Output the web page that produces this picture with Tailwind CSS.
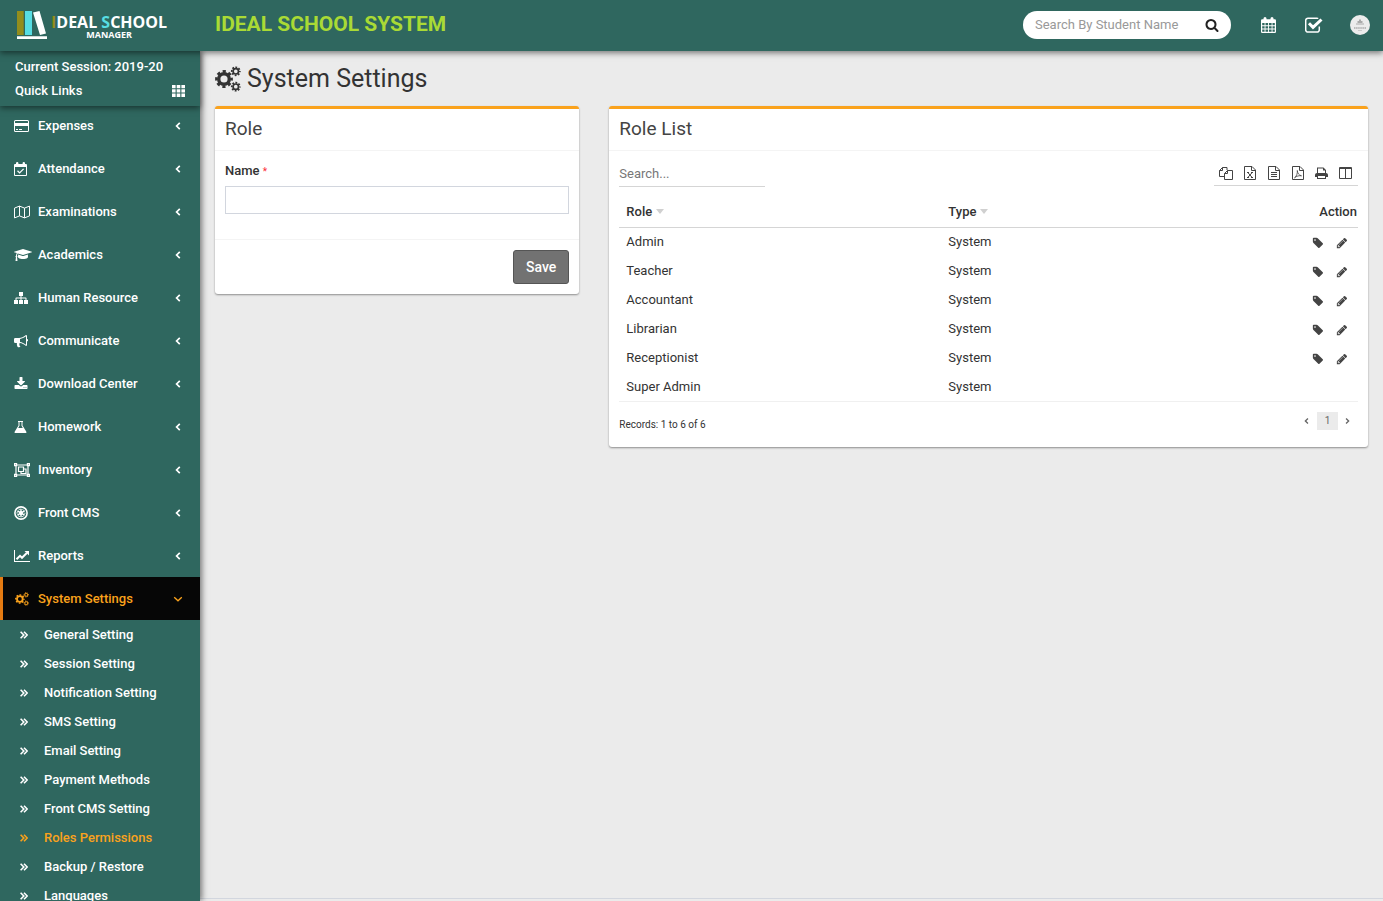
<!DOCTYPE html>
<html lang="en">
<head>
<meta charset="utf-8">
<title>Ideal School System - System Settings</title>
<script src="https://cdn.jsdelivr.net/npm/@tailwindcss/browser@4"></script>
</head>
<body class="h-screen overflow-hidden flex flex-col bg-[#ebebeb] font-[Roboto,sans-serif] text-[13px] text-[#333]">

<svg class="hidden" aria-hidden="true">
  <symbol id="cogs" viewBox="0 0 26 26"><g fill="none" stroke="currentColor"><circle cx="9" cy="13" r="5.300" stroke-width="3.400"/><circle cx="9" cy="13" r="7.600" stroke-width="2.600" stroke-dasharray="3.200 2.769" stroke-dashoffset="1.600"/><circle cx="20.800" cy="5.300" r="2.700" stroke-width="1.700"/><circle cx="20.800" cy="5.300" r="4" stroke-width="1.800" stroke-dasharray="1.800 1.342" stroke-dashoffset=".9"/><circle cx="20.800" cy="20.700" r="2.700" stroke-width="1.700"/><circle cx="20.800" cy="20.700" r="4" stroke-width="1.800" stroke-dasharray="1.800 1.342" stroke-dashoffset=".9"/></g></symbol>
  <symbol id="search" viewBox="0 0 1792 1792"><path d="M1216 832q0-185-131.500-316.500t-316.500-131.500-316.500 131.500-131.500 316.500 131.500 316.500 316.500 131.500 316.500-131.500 131.500-316.500zm512 832q0 52-38 90t-90 38q-54 0-90-38l-343-342q-179 124-399 124-143 0-273.500-55.500t-225-150-150-225-55.500-273.500 55.500-273.500 150-225 225-150 273.500-55.500 273.500 55.500 225 150 150 225 55.500 273.500q0 220-124 399l343 343q37 37 37 90z"/></symbol>
  <symbol id="pencil" viewBox="0 0 1792 1792"><path d="M491 1536l91-91-235-235-91 91v107h128v128h107zm523-928q0-22-22-22-10 0-17 7l-542 542q-7 7-7 17 0 22 22 22 10 0 17-7l542-542q7-7 7-17zm-54-192l416 416-832 832h-416v-416zm683 96q0 53-37 90l-166 166-416-416 166-165q36-38 90-38 53 0 91 38l235 234q37 39 37 91z"/></symbol>
  <symbol id="tag" viewBox="0 0 1792 1792"><path d="M576 448q0-53-37.500-90.500t-90.500-37.500-90.500 37.500-37.500 90.500 37.500 90.500 90.500 37.500 90.500-37.500 37.500-90.500zm1067 576q0 53-37 90l-491 492q-39 37-91 37-53 0-90-37l-715-716q-38-37-64.500-101t-26.500-117v-416q0-52 38-90t90-38h416q53 0 117 26.500t102 64.500l715 714q37 39 37 91z"/></symbol>
  <symbol id="download" viewBox="0 0 1792 1792"><path d="M1344 1344q0-26-19-45t-45-19-45 19-19 45 19 45 45 19 45-19 19-45zm256 0q0-26-19-45t-45-19-45 19-19 45 19 45 45 19 45-19 19-45zm128-224v320q0 40-28 68t-68 28h-1472q-40 0-68-28t-28-68v-320q0-40 28-68t68-28h465l135 136q58 56 136 56t136-56l136-136h464q40 0 68 28t28 68zm-325-569q17 41-14 70l-448 448q-18 19-45 19t-45-19l-448-448q-31-29-14-70 17-39 59-39h256v-448q0-26 19-45t45-19h256q26 0 45 19t19 45v448h256q42 0 59 39z"/></symbol>
  <symbol id="cap" viewBox="0 0 2304 1792"><path d="M1774 836l18 316q4 69-82 128t-235 93.500-323 34.500-323-34.500-235-93.500-82-128l18-316 574 181q22 7 48 7t48-7zm530-324q0 23-22 31l-1120 352q-4 1-10 1t-10-1l-652-206q-43 34-71 111.500t-34 178.500q63 36 63 109 0 69-58 107l58 433q2 14-8 25-9 11-24 11h-192q-15 0-24-11-10-11-8-25l58-433q-58-38-58-107 0-73 65-111 11-207 98-330l-333-104q-22-8-22-31t22-31l1120-352q4-1 10-1t10 1l1120 352q22 8 22 31z"/></symbol>
  <symbol id="card" viewBox="0 0 15 14"><path fill-rule="evenodd" d="M1.500 1h12A1.500 1.500 0 0 1 15 2.500v9a1.500 1.500 0 0 1-1.500 1.500h-12A1.500 1.500 0 0 1 0 11.500v-9A1.500 1.500 0 0 1 1.500 1zM1 2.500V4h13V2.500a.5.5 0 0 0-.5-.5h-12a.5.5 0 0 0-.5.5zM1 7v4.500a.5.5 0 0 0 .5.5h12a.5.5 0 0 0 .5-.5V7zM2 10h2v1H2zM5 10h3v1H5z"/><path d="M1 4h13v3H1z"/></symbol>
  <symbol id="calcheck" viewBox="0 0 13 14"><path fill-rule="evenodd" d="M1 2h1V1.200a1.200 1.200 0 0 1 2.400 0V2h4.200v-.8a1.200 1.200 0 0 1 2.400 0V2h1a1 1 0 0 1 1 1v10a1 1 0 0 1-1 1H1a1 1 0 0 1-1-1V3a1 1 0 0 1 1-1zm0 3v8h11V5z"/><path d="M3.500 8.800l2.100 2.100 4-4" fill="none" stroke="currentColor" stroke-width="1.300"/></symbol>
  <symbol id="map" viewBox="0 0 16 14"><path fill="none" stroke="currentColor" stroke-linejoin="round" d="M.5 3.100L5.500 1.100l5 2 5-2v9.800l-5 2-5-2-5 2zM5.500 1.100v9.800M10.500 3.100v9.800"/></symbol>
  <symbol id="sitemap" viewBox="0 0 14 14"><path d="M5 1h4v4H7.500v1.500h4.200a.8.8 0 0 1 .8.800V9H14v4h-4V9h1.500V7.500h-4V9H9v4H5V9h1.500V7.500h-4V9H4v4H0V9h1.500V7.300a.8.800 0 0 1 .8-.8h4.200V5H5z"/></symbol>
  <symbol id="bullhorn" viewBox="0 0 14 14"><path fill-rule="evenodd" d="M13 5a1 1 0 0 1 0 2.200V11a1 1 0 0 1-1 1c-2-1.700-4-2.800-6-3-.9.300-1 1.200-.4 1.700-.4.700.1 1.200.9 1.900-.5.900-2.200.9-3 .2C3.100 11.500 2.500 10.200 3 9H1.300A1.300 1.300 0 0 1 0 7.700V5.300A1.300 1.300 0 0 1 1.300 4H5c2.300 0 4.700-1.200 7-3a1 1 0 0 1 1 1zM12 2.300C10 3.800 8 4.700 6 4.900v3.200c2 .3 4 1.200 6 2.600z"/></symbol>
  <symbol id="flask" viewBox="0 0 13 14"><path fill-rule="evenodd" d="M4 1h5v1h-.5v3.500l3.700 5.900c.6.900.1 1.600-.8 1.600H1.600c-.9 0-1.400-.7-.8-1.600l3.700-5.900V2H4zm1.500 1v3.800L4.200 8h4.600L7.500 5.800V2z"/></symbol>
  <symbol id="group" viewBox="0 0 16 14"><path fill="none" stroke="currentColor" stroke-width="1.200" d="M2 2h12v10H2z"/><path fill="none" stroke="currentColor" stroke-width="1.200" d="M.6.600h2v2h-2zM13.400.600h2v2h-2zM.6 11.400h2v2h-2zM13.400 11.400h2v2h-2zM4.500 4h5v4.500h-5zM10 6h2v4.500H7V9"/></symbol>
  <symbol id="empire" viewBox="0 0 14 14"><circle cx="7" cy="7" r="6.100" fill="none" stroke="currentColor" stroke-width="1.600"/><circle cx="7" cy="7" r="3.900" fill="none" stroke="currentColor" stroke-width="1" stroke-dasharray="2 2.084" stroke-dashoffset="1"/><circle cx="7" cy="7" r="2"/><path stroke="currentColor" stroke-width="1.400" d="M7 2.800v8.400M3.400 4.900l7.200 4.200M3.400 9.100l7.200-4.200"/></symbol>
  <symbol id="line" viewBox="0 0 16 14"><path d="M0 1h1v11h15v1H0z"/><path fill="none" stroke="currentColor" stroke-width="2" d="M2.500 10.300L6 6.800l2 2 4.800-4.800"/><path d="M10.500 2H15v4.500z"/></symbol>
  <symbol id="left" viewBox="0 0 6 10"><path fill="none" stroke="currentColor" stroke-width="1.700" d="M4.800 1.800L1.600 5l3.200 3.200"/></symbol>
  <symbol id="down" viewBox="0 0 10 6"><path fill="none" stroke="currentColor" stroke-width="1.300" d="M1.200 1.200L5 4.800l3.800-3.600"/></symbol>
  <symbol id="dbl" viewBox="0 0 8 8"><path fill="none" stroke="currentColor" stroke-width="1.600" d="M.6.800L3.800 4 .6 7.200M4 .8L7.200 4 4 7.200"/></symbol>
  <symbol id="th" viewBox="0 0 13 12"><path d="M0 0h3.600v3.300H0zM4.700 0h3.600v3.300H4.700zM9.400 0H13v3.300H9.400zM0 4.300h3.600v3.300H0zM4.700 4.300h3.600v3.300H4.700zM9.400 4.300H13v3.300H9.400zM0 8.600h3.600V12H0zM4.700 8.600h3.600V12H4.700zM9.400 8.600H13V12H9.400z"/></symbol>
  <symbol id="calendar" viewBox="0 0 15 16"><path fill-rule="evenodd" d="M1.200 2.200H2.500V1.500a1.500 1.500 0 0 1 3 0v.7h4V1.500a1.500 1.500 0 0 1 3 0v.7h1.300A1.200 1.200 0 0 1 15 3.400v11.400a1.200 1.200 0 0 1-1.200 1.200H1.200A1.200 1.200 0 0 1 0 14.800V3.400a1.200 1.200 0 0 1 1.200-1.200zM1.200 6v2.300h2.400V6zm3.300 0v2.300h2.600V6zm3.500 0v2.300h2.600V6zm3.500 0v2.300h2.300V6zM1.200 9.200v2.400h2.400V9.200zm3.300 0v2.400h2.600V9.200zm3.500 0v2.400h2.600V9.200zm3.500 0v2.400h2.300V9.200zM1.200 12.500v2.300h2.400v-2.300zm3.300 0v2.300h2.600v-2.300zm3.500 0v2.300h2.600v-2.300zm3.500 0v2.300h2.300v-2.300z"/></symbol>
  <symbol id="check" viewBox="0 0 18 16"><path fill="none" stroke="currentColor" stroke-width="1.500" d="M14.300 9.500v3.300a2.300 2.300 0 0 1-2.300 2.300H3A2.300 2.300 0 0 1 .7 12.800V3.500A2.300 2.300 0 0 1 3 1.200h9c.6 0 1 .1 1.300.3"/><path fill="none" stroke="currentColor" stroke-width="3" d="M4 6.300l4 4 8.500-7.800"/></symbol>
  <symbol id="copy" viewBox="0 0 14 14"><path fill="none" stroke="currentColor" stroke-linejoin="round" d="M5.500 10.500h-5v-6l3-3h4.500v2.500M3.500 1.500v3h-3M5.500 7.500l3-3h5v9h-8zM8.500 4.500v3h-3"/></symbol>
  <symbol id="file" viewBox="0 0 12 14"><path fill="none" stroke="currentColor" stroke-linejoin="round" d="M.5.500h7.500l3.500 3.500v9.500H.5zM7.500.5v4h4"/></symbol>
  <symbol id="excel" viewBox="0 0 12 14"><use href="#file" width="12" height="14"/><path fill="none" stroke="currentColor" d="M3.800 6.500l4.400 5M8.200 6.500l-4.400 5M3 6.500h2M7 6.500h2M3 11.500h2M7 11.500h2"/></symbol>
  <symbol id="text" viewBox="0 0 12 14"><use href="#file" width="12" height="14"/><path stroke="currentColor" d="M3 6.500h6M3 8.500h6M3 10.500h6"/></symbol>
  <symbol id="pdf" viewBox="0 0 12 14"><use href="#file" width="12" height="14"/><path fill="none" stroke="currentColor" stroke-width=".8" d="M5.300 4.500c.2 2.500 1.500 4.700 4.200 5.300-2.200-.4-5 .2-7 2C4.500 10.500 5.600 7.500 5.300 4.500z"/></symbol>
  <symbol id="print" viewBox="0 0 13 14"><path fill-rule="evenodd" d="M2 7V1.500h6.500L11 4v3a2 2 0 0 1 2 1.800V11h-2v2H2v-2H0V8.800A2 2 0 0 1 2 7zm1-4.500V7h7V4.500H8v-2zM3 10v2h7v-2z"/></symbol>
  <symbol id="columns" viewBox="0 0 13 12"><path fill-rule="evenodd" d="M1 0h11a1 1 0 0 1 1 1v10a1 1 0 0 1-1 1H1a1 1 0 0 1-1-1V1a1 1 0 0 1 1-1zm0 2v9h5V2zm6 0v9h5V2z"/></symbol>
</svg>

<header class="relative z-20 flex h-[51px] shrink-0 items-center bg-[#2f675f] pb-px shadow-[0_2px_6px_rgba(0,0,0,0.5)]">
  <a href="#" class="flex w-[200px] shrink-0 items-center gap-1 pl-4 font-['Open_Sans',sans-serif] font-bold text-white">
    <svg class="h-7 w-[31px]" viewBox="0 0 31 28" aria-hidden="true"><path fill="#938d1c" d="M1 0h6.700v24H1z"/><path fill="#57dde3" d="M9 0h7v24H9z"/><path fill="#fff" d="M17 1.500L23.500 0 30 22.500 24 24zM1 25.200h30V28H1z"/></svg>
    <span class="flex flex-col items-center pt-1">
      <span class="text-base leading-4"><span class="text-[#938d1c]">I</span>DEAL <span class="text-[#57dde3]">S</span>CHOOL</span>
      <span class="text-[9px] leading-[10px]">MANAGER</span>
    </span>
  </a>
  <span class="pb-[3px] pl-[15px] text-[21px] leading-6 font-bold text-[#a9da35]">IDEAL SCHOOL SYSTEM</span>
  <form class="ml-auto flex h-7 w-[208px] items-center rounded-full bg-white pr-3 pl-3">
    <input type="text" aria-label="Search by student" placeholder="Search By Student Name" class="w-[147px] text-[13px] outline-none placeholder:text-[#999]">
    <button type="button" aria-label="Search" class="ml-auto"><svg class="size-[14px] fill-[#222]"><use href="#search"/></svg></button>
  </form>
  <nav class="flex items-center pr-[13px] pl-[30px] text-white">
    <a href="#" aria-label="Calendar"><svg class="h-4 w-[15px] fill-current"><use href="#calendar"/></svg></a>
    <a href="#" aria-label="Tasks" class="ml-[29px]"><svg class="h-4 w-[18px] fill-current"><use href="#check"/></svg></a>
    <a href="#" aria-label="Profile" class="ml-[27px]"><svg class="size-5" viewBox="0 0 20 20"><circle cx="10" cy="10" r="10" fill="#ececec"/><path fill="#aaa" d="M6 8.500h8v1H6zM7.500 6h5v2h-5zM9 4.500h2V6H9zM8 15.500h4v.6H8z"/><path stroke="#bbb" stroke-width="2" stroke-dasharray="1.500 .6" d="M4 13h12"/></svg></a>
  </nav>
</header>

<div class="flex min-h-0 flex-1">
  <aside class="relative z-10 w-[200px] shrink-0 bg-[#2f675f] font-medium text-white shadow-[2px_0_6px_rgba(0,0,0,0.5)]">
    <div class="relative h-[55px] px-[15px] pt-1 leading-6 shadow-[0_2px_6px_rgba(0,0,0,0.5)]">
      <p>Current Session: 2019-20</p>
      <a href="#" class="flex items-center justify-between">Quick Links <svg class="h-3 w-[13px] fill-current"><use href="#th"/></svg></a>
    </div>
    <nav class="-mt-0.5">
      <a href="#" class="flex h-[43px] items-center pr-[19px] pl-[14px]"><span class="w-6"><svg class="h-[14px] w-[15px] fill-current"><use href="#card"/></svg></span>Expenses<svg class="ml-auto h-[10px] w-[6px]"><use href="#left"/></svg></a>
      <a href="#" class="flex h-[43px] items-center pr-[19px] pl-[14px]"><span class="w-6"><svg class="h-[14px] w-[13px] fill-current"><use href="#calcheck"/></svg></span>Attendance<svg class="ml-auto h-[10px] w-[6px]"><use href="#left"/></svg></a>
      <a href="#" class="flex h-[43px] items-center pr-[19px] pl-[14px]"><span class="w-6"><svg class="h-[14px] w-4 fill-current"><use href="#map"/></svg></span>Examinations<svg class="ml-auto h-[10px] w-[6px]"><use href="#left"/></svg></a>
      <a href="#" class="flex h-[43px] items-center pr-[19px] pl-[14px]"><span class="w-6"><svg class="h-[14px] w-[18px] fill-current"><use href="#cap"/></svg></span>Academics<svg class="ml-auto h-[10px] w-[6px]"><use href="#left"/></svg></a>
      <a href="#" class="flex h-[43px] items-center pr-[19px] pl-[14px]"><span class="w-6"><svg class="size-[14px] fill-current"><use href="#sitemap"/></svg></span>Human Resource<svg class="ml-auto h-[10px] w-[6px]"><use href="#left"/></svg></a>
      <a href="#" class="flex h-[43px] items-center pr-[19px] pl-[14px]"><span class="w-6"><svg class="size-[14px] fill-current"><use href="#bullhorn"/></svg></span>Communicate<svg class="ml-auto h-[10px] w-[6px]"><use href="#left"/></svg></a>
      <a href="#" class="flex h-[43px] items-center pr-[19px] pl-[14px]"><span class="w-6"><svg class="size-[14px] fill-current"><use href="#download"/></svg></span>Download Center<svg class="ml-auto h-[10px] w-[6px]"><use href="#left"/></svg></a>
      <a href="#" class="flex h-[43px] items-center pr-[19px] pl-[14px]"><span class="w-6"><svg class="h-[14px] w-[13px] fill-current"><use href="#flask"/></svg></span>Homework<svg class="ml-auto h-[10px] w-[6px]"><use href="#left"/></svg></a>
      <a href="#" class="flex h-[43px] items-center pr-[19px] pl-[14px]"><span class="w-6"><svg class="h-[14px] w-4 fill-current"><use href="#group"/></svg></span>Inventory<svg class="ml-auto h-[10px] w-[6px]"><use href="#left"/></svg></a>
      <a href="#" class="flex h-[43px] items-center pr-[19px] pl-[14px]"><span class="w-6"><svg class="size-[14px] fill-current"><use href="#empire"/></svg></span>Front CMS<svg class="ml-auto h-[10px] w-[6px]"><use href="#left"/></svg></a>
      <a href="#" class="flex h-[43px] items-center pr-[19px] pl-[14px]"><span class="w-6"><svg class="h-[14px] w-4 fill-current"><use href="#line"/></svg></span>Reports<svg class="ml-auto h-[10px] w-[6px]"><use href="#left"/></svg></a>
      <a href="#" class="flex h-[43px] items-center border-l-3 border-[#e57b12] bg-[#060606] pr-[17px] pl-3 text-[#faa21c]"><span class="w-[23px]"><svg class="size-[14px] fill-current"><use href="#cogs"/></svg></span>System Settings<svg class="ml-auto h-[6px] w-[10px]"><use href="#down"/></svg></a>
      <a href="#" class="flex h-[29px] items-center pl-5"><span class="w-6"><svg class="size-2"><use href="#dbl"/></svg></span>General Setting</a>
      <a href="#" class="flex h-[29px] items-center pl-5"><span class="w-6"><svg class="size-2"><use href="#dbl"/></svg></span>Session Setting</a>
      <a href="#" class="flex h-[29px] items-center pl-5"><span class="w-6"><svg class="size-2"><use href="#dbl"/></svg></span>Notification Setting</a>
      <a href="#" class="flex h-[29px] items-center pl-5"><span class="w-6"><svg class="size-2"><use href="#dbl"/></svg></span>SMS Setting</a>
      <a href="#" class="flex h-[29px] items-center pl-5"><span class="w-6"><svg class="size-2"><use href="#dbl"/></svg></span>Email Setting</a>
      <a href="#" class="flex h-[29px] items-center pl-5"><span class="w-6"><svg class="size-2"><use href="#dbl"/></svg></span>Payment Methods</a>
      <a href="#" class="flex h-[29px] items-center pl-5"><span class="w-6"><svg class="size-2"><use href="#dbl"/></svg></span>Front CMS Setting</a>
      <a href="#" class="flex h-[29px] items-center pl-5 text-[#faa21c]"><span class="w-6"><svg class="size-2"><use href="#dbl"/></svg></span>Roles Permissions</a>
      <a href="#" class="flex h-[29px] items-center pl-5"><span class="w-6"><svg class="size-2"><use href="#dbl"/></svg></span>Backup / Restore</a>
      <a href="#" class="flex h-[29px] items-center pl-5"><span class="w-6"><svg class="size-2"><use href="#dbl"/></svg></span>Languages</a>
    </nav>
  </aside>

  <div class="flex min-w-0 flex-1 flex-col">
    <main class="flex-1">
      <h1 class="flex h-[55px] items-center gap-[6px] px-[15px] text-[25px]"><svg class="size-[26px] fill-current"><use href="#cogs"/></svg>System Settings</h1>
      <div class="flex items-start">
        <div class="w-1/3 px-[15px]">
          <form class="rounded-[3px] border-t-3 border-[#faa21c] bg-white shadow-[0_1px_2px_rgba(0,0,0,0.4)]">
            <h2 class="h-[42px] border-b border-[#f4f4f4] px-[10px] pt-1.5 text-[19px] leading-7 text-[#444]">Role</h2>
            <div class="px-[10px] pt-[10px] pb-[25px]">
              <label for="role-name" class="block leading-5 font-medium">Name <span class="text-[10px] font-normal text-red-500">*</span></label>
              <input id="role-name" type="text" class="mt-1 block h-7 w-full border border-[#d2d6de] px-3 outline-none">
            </div>
            <div class="flex justify-end border-t border-[#f4f4f4] p-[10px]">
              <button type="button" class="h-[34px] rounded-[3px] border border-[#555] bg-[#727272] px-3 text-[14px] font-medium text-white">Save</button>
            </div>
          </form>
        </div>
        <div class="w-2/3 px-[15px]">
          <section class="rounded-[3px] border-t-3 border-[#faa21c] bg-white shadow-[0_1px_2px_rgba(0,0,0,0.4)]">
            <h2 class="h-[42px] border-b border-[#f4f4f4] px-[10px] pt-1.5 text-[19px] leading-7 text-[#444]">Role List</h2>
            <div class="px-[10px] pt-[10px] pb-[14px]">
              <div class="flex items-start justify-between">
                <input type="search" aria-label="Search roles" placeholder="Search..." class="h-[26px] w-[146px] border-b border-[#d5d5d5] outline-none placeholder:text-[#777]">
                <div class="flex h-[25px] items-center border-b border-[#d5d5d5] text-[#444]">
                  <button type="button" aria-label="Copy" class="grid w-6 place-items-center"><svg class="size-[14px] fill-current"><use href="#copy"/></svg></button>
                  <button type="button" aria-label="Excel" class="grid w-6 place-items-center"><svg class="h-[14px] w-[12px] fill-current"><use href="#excel"/></svg></button>
                  <button type="button" aria-label="CSV" class="grid w-6 place-items-center"><svg class="h-[14px] w-[12px] fill-current"><use href="#text"/></svg></button>
                  <button type="button" aria-label="PDF" class="grid w-6 place-items-center"><svg class="h-[14px] w-[12px] fill-current"><use href="#pdf"/></svg></button>
                  <button type="button" aria-label="Print" class="grid w-6 place-items-center"><svg class="h-[14px] w-[13px] fill-current"><use href="#print"/></svg></button>
                  <button type="button" aria-label="Columns" class="grid w-6 place-items-center"><svg class="h-3 w-[13px] fill-current"><use href="#columns"/></svg></button>
                </div>
              </div>
              <table class="mt-[10px] w-full table-fixed border-collapse border-b border-[#f0f0f0]">
                <thead>
                  <tr class="h-[30px] border-b border-[#d5d5d5] text-left">
                    <th class="w-[322px] pl-[7px] font-medium"><span class="flex items-center gap-1">Role <span class="border-x-4 border-t-[5px] border-x-transparent border-t-[#d0d0d0]"></span></span></th>
                    <th class="pl-[7px] font-medium"><span class="flex items-center gap-1">Type <span class="border-x-4 border-t-[5px] border-x-transparent border-t-[#d0d0d0]"></span></span></th>
                    <th class="w-[120px] pr-px text-right font-medium">Action</th>
                  </tr>
                </thead>
                <tbody id="roles"></tbody>
              </table>
              <div class="flex items-center justify-between pt-[9px]">
                <p class="pt-1.5 text-[10px] leading-4">Records: 1 to 6 of 6</p>
                <div class="flex items-center pb-0.5 text-[10px] text-[#666]">
                  <button type="button" aria-label="Previous" class="grid w-5 place-items-center"><svg class="h-[8px] w-[5px]"><use href="#left"/></svg></button>
                  <button type="button" class="h-[18px] w-[21px] bg-[#ebebeb]">1</button>
                  <button type="button" aria-label="Next" class="grid w-5 rotate-180 place-items-center"><svg class="h-[8px] w-[5px]"><use href="#left"/></svg></button>
                </div>
              </div>
            </div>
          </section>
        </div>
      </div>
    </main>
    <footer class="h-[3px] border-t border-[#d2d6de]"></footer>
  </div>
</div>

<script>
  const actions = `<span class="flex justify-end gap-3 pt-[3px] pr-[10px] text-[#444]"><button type="button" aria-label="Assign permission"><svg class="size-3 fill-current"><use href="#tag"/></svg></button><button type="button" aria-label="Edit"><svg class="size-3 fill-current"><use href="#pencil"/></svg></button></span>`;
  document.getElementById('roles').innerHTML = ['Admin', 'Teacher', 'Accountant', 'Librarian', 'Receptionist', 'Super Admin']
    .map(r => `<tr class="h-[29px]"><td class="pl-[7px]">${r}</td><td class="pl-[7px]">System</td><td>${r === 'Super Admin' ? '' : actions}</td></tr>`).join('');
</script>
</body>
</html>
